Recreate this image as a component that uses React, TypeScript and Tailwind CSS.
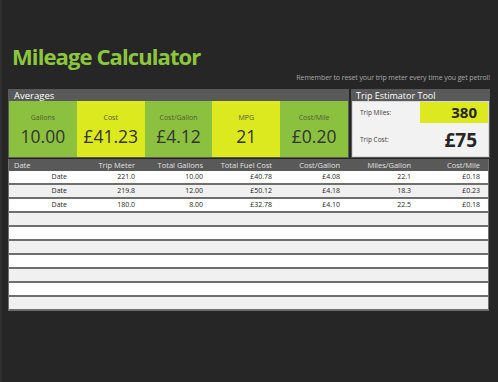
const tiles = [
  { label: "Gallons", value: "10.00", bg: "bg-[#8cc13f]" },
  { label: "Cost", value: "£41.23", bg: "bg-[#dde91f]" },
  { label: "Cost/Gallon", value: "£4.12", bg: "bg-[#8cc13f]" },
  { label: "MPG", value: "21", bg: "bg-[#dde91f]" },
  { label: "Cost/Mile", value: "£0.20", bg: "bg-[#8cc13f]" },
];

const headers = ["Trip Meter", "Total Gallons", "Total Fuel Cost", "Cost/Gallon", "Miles/Gallon", "Cost/Mile"];

const rows = [
  ["Date", "221.0", "10.00", "£40.78", "£4.08", "22.1", "£0.18"],
  ["Date", "219.8", "12.00", "£50.12", "£4.18", "18.3", "£0.23"],
  ["Date", "180.0", "8.00", "£32.78", "£4.10", "22.5", "£0.18"],
  [], [], [], [], [], [], [],
];

const cols = "grid grid-cols-[68px_68px_68px_69px_68px_71px_69px]";

const App = () => {
  return (
    <div className="w-[498px] h-[382px] bg-[#262626] border-l-2 border-[#2f2f2f] overflow-hidden font-['Open_Sans',sans-serif]">
      <h1 className="pt-[42px] pl-[10px] text-[22px] leading-[28px] font-bold tracking-[-0.9px] text-[#8cc63f]">
        Mileage Calculator
      </h1>
      <p className="mt-[3px] pr-[8px] text-right text-[7px] leading-[10px] text-[#a6a6a6] tracking-[-0.1px]">
        Remember to reset your trip meter every time you get petrol!
      </p>

      <div className="mt-[6px] ml-[6px] flex gap-[2px]">
        {/* averages */}
        <div className="w-[341px] bg-[#595959] border border-[#595959]">
          <div className="h-[11px] pl-[5px] text-[9.5px] leading-[11px] text-white">Averages</div>
          <div className="flex h-[56px]">
            {tiles.map((t) => (
              <div key={t.label} className={`${t.bg} flex-1 flex flex-col items-center pt-[13px] gap-[5px]`}>
                <span className="text-[7px] leading-[8px] text-[#4d5a35]">{t.label}</span>
                <span className="text-[17.5px] leading-[18px] text-[#333333]">{t.value}</span>
              </div>
            ))}
          </div>
        </div>

        {/* trip estimator */}
        <div className="w-[139px] bg-[#595959] border border-[#595959]">
          <div className="h-[11px] pl-[4px] text-[9px] leading-[11px] font-medium text-white">Trip Estimator Tool</div>
          <div className="h-[56px] bg-[#f2f2f2] border border-[#d9d9d9]">
            <div className="flex h-[21px] items-center">
              <span className="flex-1 pl-[7px] text-[6.5px] text-[#404040]">Trip Miles:</span>
              <span className="w-[68px] h-full bg-[#dde91f] flex items-center justify-end pr-[11px] text-[15px] font-bold text-[#262626]">380</span>
            </div>
            <div className="flex h-[34px] items-center">
              <span className="flex-1 pl-[7px] text-[6.5px] text-[#404040]">Trip Cost:</span>
              <span className="pr-[11px] text-[19px] font-bold text-[#262626]">£75</span>
            </div>
          </div>
        </div>
      </div>

      {/* log table */}
      <div className="mt-[1px] ml-[6px] w-[481px] border-x border-[#707070]">
        <div className={`${cols} h-[12px] bg-[#595959] text-[7.5px] leading-[12px] text-[#e0e0e0]`}>
          <span className="pl-[5px]">Date</span>
          {headers.map((h) => (
            <span key={h} className="text-right pr-[10px]">{h}</span>
          ))}
        </div>
        {rows.map((r, i) => (
          <div
            key={i}
            className={`${cols} h-[14px] border-b-2 border-[#6e6e6e] text-[7px] leading-[12px] text-[#1f1f1f] ${i % 2 ? "bg-[#f0f0f0]" : "bg-white"}`}
          >
            {r.map((c, j) => (
              <span key={j} className="text-right pr-[10px]">{c}</span>
            ))}
          </div>
        ))}
      </div>
    </div>
  );
};

export default App;
